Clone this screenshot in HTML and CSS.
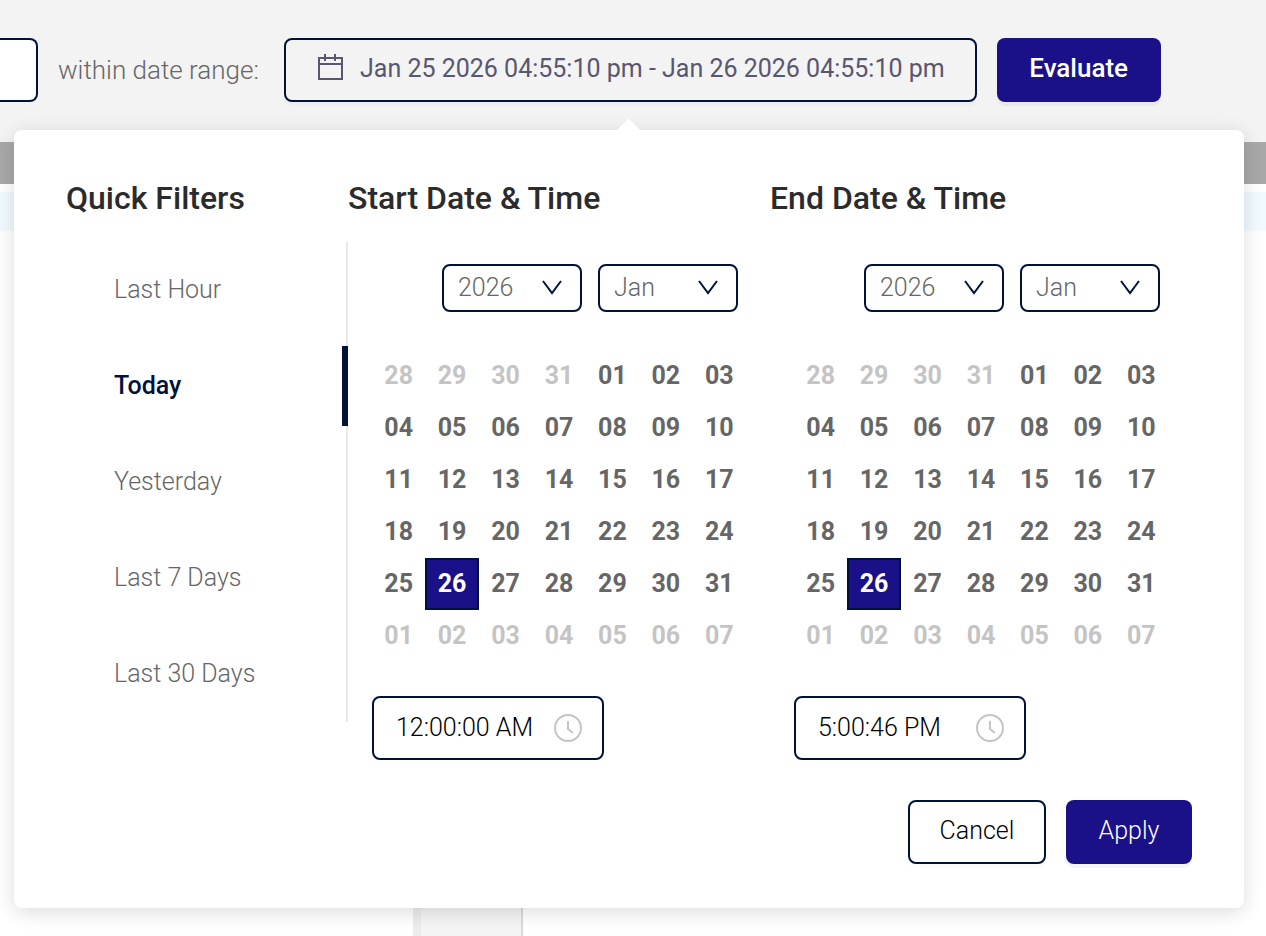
FILE: index.html
```
<!DOCTYPE html>
<html lang="en">
<head>
<meta charset="utf-8">
<meta name="viewport" content="width=device-width, initial-scale=1">
<title>Date range</title>
<link rel="stylesheet" href="styles.css">
</head>
<body>
<div class="page">
  <header class="toolbar">
    <input class="toolbar-input" type="text" aria-label="Value">
    <span class="toolbar-label" id="range-label">within date range:</span>
    <div class="range">
      <button class="range-button" type="button" aria-expanded="true">
        <svg class="calendar-icon" viewBox="0 0 28 28" aria-hidden="true"><path d="M3 4h23v21H3zM3 10h23M9 0v7M19 0v7"/></svg>
        <span>Jan 25 2026 04:55:10 pm - Jan 26 2026 04:55:10 pm</span>
      </button>
    </div>
    <button class="evaluate" type="button">Evaluate</button>
  </header>
  <div class="band-dark"></div>
  <div class="band-light"></div>
  <main class="backdrop"><div class="backdrop-column"></div></main>

  <section class="popover" role="dialog" aria-labelledby="range-label">
    <div class="panels">
      <div class="panel">
        <h2 class="title">Quick Filters</h2>
        <nav class="filters">
          <button class="filter" type="button">Last Hour</button>
          <button class="filter filter-active" type="button">Today</button>
          <button class="filter" type="button">Yesterday</button>
          <button class="filter" type="button">Last 7 Days</button>
          <button class="filter" type="button">Last 30 Days</button>
        </nav>
      </div>
      <div class="panel" data-calendar="Start" data-time="12:00:00 AM">
        <h2 class="title">Start Date &amp; Time</h2>
      </div>
      <div class="panel" data-calendar="End" data-time="5:00:46 PM">
        <h2 class="title">End Date &amp; Time</h2>
      </div>
    </div>
    <footer class="actions">
      <button class="cancel" type="button">Cancel</button>
      <button class="apply" type="button">Apply</button>
    </footer>
  </section>
</div>
<script src="calendar.js"></script>
</body>
</html>
```
FILE: calendar.js
```
const pad = n => String(n).padStart(2, "0");

function weeks() {
  let html = "";
  const date = new Date(2025, 11, 28);
  for (let row = 0; row < 6; row++) {
    html += "<tr>";
    for (let col = 0; col < 7; col++) {
      const inMonth = date.getMonth() === 0;
      const selected = inMonth && date.getDate() === 26;
      const name = selected ? "day day-selected" : inMonth ? "day" : "day day-outside";
      html += `<td><button type="button" class="${name}">${pad(date.getDate())}</button></td>`;
      date.setDate(date.getDate() + 1);
    }
    html += "</tr>";
  }
  return html;
}

function dropdown(label, value) {
  return `<div class="dropdown"><select aria-label="${label}"><option>${value}</option></select>
    <svg class="chevron" viewBox="0 0 22 16" aria-hidden="true"><path d="M2 1l9 12 9-12"/></svg></div>`;
}

document.querySelectorAll("[data-calendar]").forEach(panel => {
  const { calendar, time } = panel.dataset;
  panel.insertAdjacentHTML("beforeend", `<div class="picker">
    <div class="dropdowns">${dropdown(calendar + " year", "2026")}${dropdown(calendar + " month", "Jan")}</div>
    <table class="days"><tbody>${weeks()}</tbody></table>
    <div class="time"><input type="text" aria-label="${calendar} time" value="${time}">
      <svg class="clock" viewBox="0 0 28 28" aria-hidden="true"><circle cx="14" cy="14" r="13"/><path d="M14 7v8l5 4"/></svg></div>
  </div>`);
});
```
FILE: styles.css
```
* { box-sizing: border-box; }
body { margin: 0; background: #fff; }
body, button, input, select {
  font-family: Roboto, "Liberation Sans", sans-serif;
  font-size: 25px;
  font-weight: 300;
}
button { padding: 0; border: 0; background: none; cursor: pointer; }
svg { fill: none; }

.page { position: relative; display: flex; flex-direction: column; min-height: 100vh; overflow: hidden; }

.toolbar { display: flex; align-items: center; gap: 20px; padding: 38px 0 40px; background: #f3f3f3; }
.toolbar-input {
  width: 38px; height: 64px; padding: 0;
  border: 2px solid #00113a; border-left: 0; border-radius: 0 8px 8px 0; background: #fff;
}
.toolbar-label { flex: 0 0 206px; color: #666; font-size: 26px; white-space: nowrap; }
.range-button {
  display: flex; align-items: center; gap: 16px; height: 64px; padding: 0 30px 4px;
  border: 2px solid #00113a; border-radius: 8px;
  color: #59566f; font-weight: 400; white-space: nowrap;
  box-shadow: 0 4px 0 rgba(0, 0, 0, .02);
}
.calendar-icon { width: 28px; height: 28px; stroke: #59566f; stroke-width: 2; }
.evaluate, .apply {
  height: 64px; padding: 0 32px 4px; border-radius: 8px;
  background: #1a1188; color: #fff; box-shadow: 0 4px 0 rgba(0, 0, 0, .04);
}
.evaluate { min-width: 164px; font-size: 26px; font-weight: 500; }

.band-dark { height: 42px; background: #a8a8a8; }
.band-light { height: 39px; margin-top: 8px; background: #f0faff; }
.backdrop { display: flex; flex: 1; padding-left: 413px; }
.backdrop-column { width: 110px; border-left: 8px solid #ececec; border-right: 2px solid #d8d8d8; background: #f4f4f4; }

.popover {
  position: absolute; top: 130px; left: 14px; right: 22px;
  padding: 48px 52px 44px; border-radius: 8px; background: #fff;
  box-shadow: 0 4px 20px rgba(0, 0, 0, .14);
}
.popover::before {
  content: ""; position: absolute; top: -8px; left: 50%; width: 17px; height: 17px; margin-left: -9px;
  background: #fff; transform: rotate(45deg);
}
.panels { display: grid; grid-template-columns: 282fr 422fr 422fr; }
.title { margin: 0 0 24px; color: #2b2b2b; font-size: 32px; font-weight: 500; line-height: 40px; white-space: nowrap; }
.filters { display: flex; flex-direction: column; gap: 16px; padding: 8px 0; border-right: 2px solid #e8e8e8; }
.filter { height: 80px; margin-right: -2px; padding: 0 0 2px 48px; color: #666; text-align: left; }
.filter-active { border-right: 6px solid #00113a; color: #00113a; font-weight: 500; }

.picker { padding: 22px 24px 0; }
.dropdowns { display: flex; justify-content: flex-end; gap: 16px; padding-right: 8px; }
.dropdown { position: relative; width: 140px; }
.dropdown select {
  width: 100%; height: 48px; padding: 0 14px 2px; appearance: none;
  border: 2px solid #00113a; border-radius: 8px; background: #fff; color: #666;
}
.chevron { position: absolute; top: 16px; right: 19px; width: 22px; height: 16px; stroke: #00113a; stroke-width: 2; pointer-events: none; }
.days { width: 100%; margin: 38px 0 34px; border-collapse: collapse; table-layout: fixed; }
.days td { padding: 0; }
.day { display: block; width: 100%; height: 52px; padding-bottom: 2px; color: #666; font-weight: 700; }
.day-outside { color: #c4c4c4; }
.day-selected { border: 2px solid #00113a; background: #1a1188; color: #fff; }
.time { position: relative; width: 232px; }
.time input {
  width: 100%; height: 64px; padding: 0 48px 2px 22px;
  border: 2px solid #00113a; border-radius: 8px; background: #fff; color: #000;
}
.clock { position: absolute; top: 18px; right: 22px; width: 28px; height: 28px; stroke: #c4c4c4; stroke-width: 2; }

.actions { display: flex; justify-content: flex-end; gap: 20px; margin-top: 40px; }
.cancel {
  min-width: 138px; height: 64px; padding: 0 28px 4px;
  border: 2px solid #00113a; border-radius: 8px; color: #000;
  box-shadow: 0 4px 0 rgba(0, 0, 0, .01);
}
.apply { min-width: 126px; }
```
